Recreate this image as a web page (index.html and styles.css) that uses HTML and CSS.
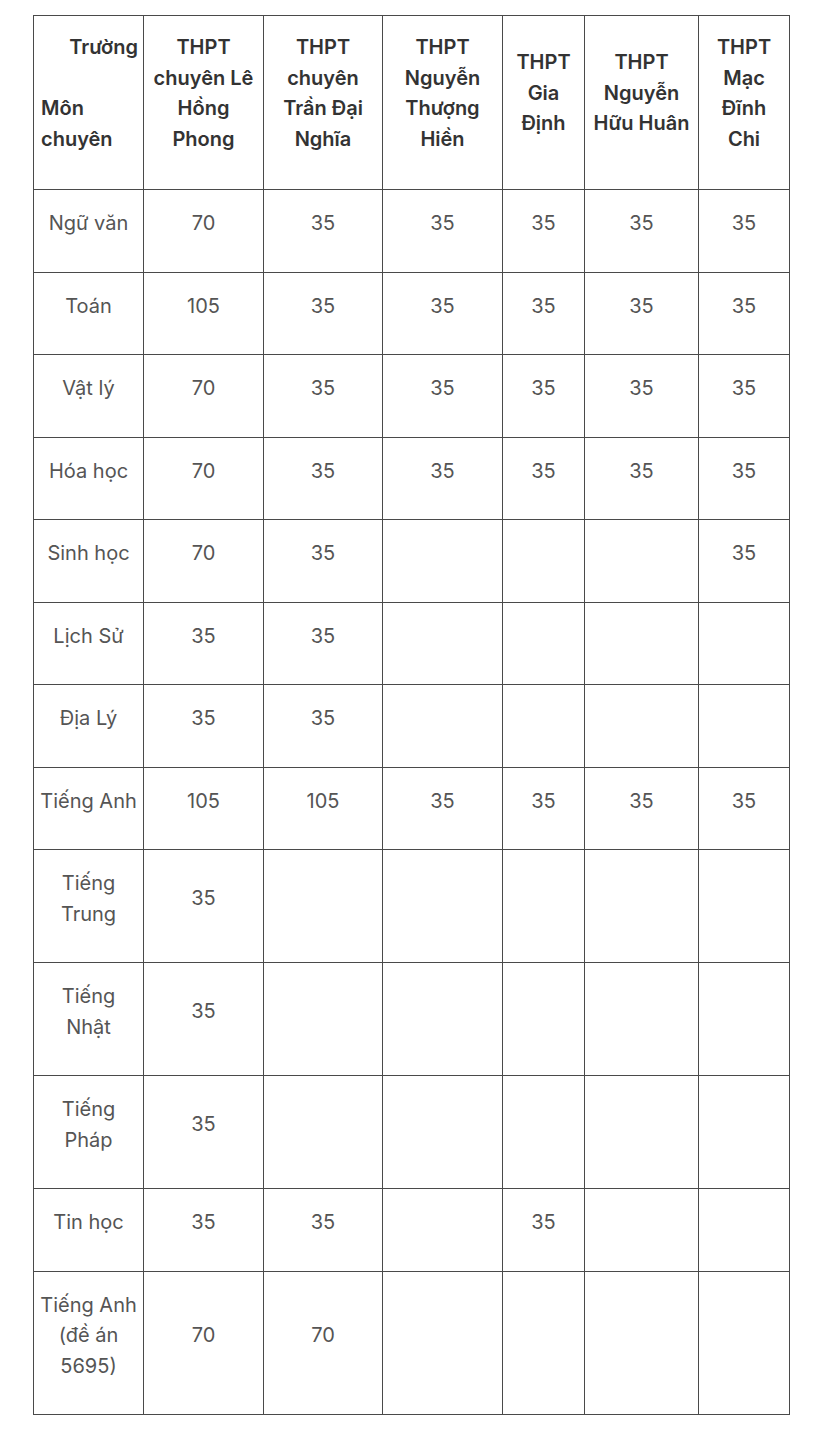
FILE: index.html
```html
<!DOCTYPE html>
<html lang="vi">
<head>
<meta charset="utf-8">
<link rel="stylesheet" href="styles.css">
</head>
<body>
<table class="quota">
  <colgroup>
    <col class="c1"><col class="c2"><col class="c3"><col class="c4"><col class="c5"><col class="c6"><col class="c7">
  </colgroup>
  <thead>
    <tr>
      <th class="corner"><div class="right">Trường</div><div class="blank">&nbsp;</div><div class="left">Môn<br>chuyên</div></th>
      <th>THPT<br>chuyên Lê<br>Hồng<br>Phong</th>
      <th>THPT<br>chuyên<br>Trần Đại<br>Nghĩa</th>
      <th>THPT<br>Nguyễn<br>Thượng<br>Hiền</th>
      <th>THPT<br>Gia<br>Định</th>
      <th>THPT<br>Nguyễn<br>Hữu Huân</th>
      <th>THPT<br>Mạc<br>Đĩnh<br>Chi</th>
    </tr>
  </thead>
  <tbody>
    <tr><td>Ngữ văn</td><td>70</td><td>35</td><td>35</td><td>35</td><td>35</td><td>35</td></tr>
    <tr><td>Toán</td><td>105</td><td>35</td><td>35</td><td>35</td><td>35</td><td>35</td></tr>
    <tr><td>Vật lý</td><td>70</td><td>35</td><td>35</td><td>35</td><td>35</td><td>35</td></tr>
    <tr><td>Hóa học</td><td>70</td><td>35</td><td>35</td><td>35</td><td>35</td><td>35</td></tr>
    <tr><td>Sinh học</td><td>70</td><td>35</td><td></td><td></td><td></td><td>35</td></tr>
    <tr><td>Lịch Sử</td><td>35</td><td>35</td><td></td><td></td><td></td><td></td></tr>
    <tr><td>Địa Lý</td><td>35</td><td>35</td><td></td><td></td><td></td><td></td></tr>
    <tr><td>Tiếng Anh</td><td>105</td><td>105</td><td>35</td><td>35</td><td>35</td><td>35</td></tr>
    <tr><td>Tiếng<br>Trung</td><td>35</td><td></td><td></td><td></td><td></td><td></td></tr>
    <tr><td>Tiếng<br>Nhật</td><td>35</td><td></td><td></td><td></td><td></td><td></td></tr>
    <tr><td>Tiếng<br>Pháp</td><td>35</td><td></td><td></td><td></td><td></td><td></td></tr>
    <tr><td>Tin học</td><td>35</td><td>35</td><td></td><td>35</td><td></td><td></td></tr>
    <tr><td>Tiếng Anh<br>(đề án<br>5695)</td><td>70</td><td>70</td><td></td><td></td><td></td><td></td></tr>
  </tbody>
</table>
</body>
</html>
```
FILE: styles.css
```css
html, body {
  margin: 0;
  background: #ffffff;
}
body {
  padding: 15px 0 0 33px;
  font-family: Inter, "Noto Sans", "Liberation Sans", sans-serif;
  font-size: 20px;
  line-height: 30.5px;
  color: #555555;
}
.quota {
  border-collapse: collapse;
  table-layout: fixed;
  width: 756px;
}
.c1 { width: 110px; }
.c2 { width: 120px; }
.c3 { width: 119px; }
.c4 { width: 120px; }
.c5 { width: 82px; }
.c6 { width: 114px; }
.c7 { width: 91px; }
.quota th,
.quota td {
  border: 1.5px solid #4a4a4a;
  padding: 18px 4px 33px;
  text-align: center;
  vertical-align: middle;
}
.quota th {
  color: #333333;
  font-weight: 600;
  padding-top: 16px;
  padding-bottom: 35px;
}
.quota th.corner {
  padding-left: 7px;
  padding-right: 5px;
}
.right { text-align: right; }
.left { text-align: left; }
```
